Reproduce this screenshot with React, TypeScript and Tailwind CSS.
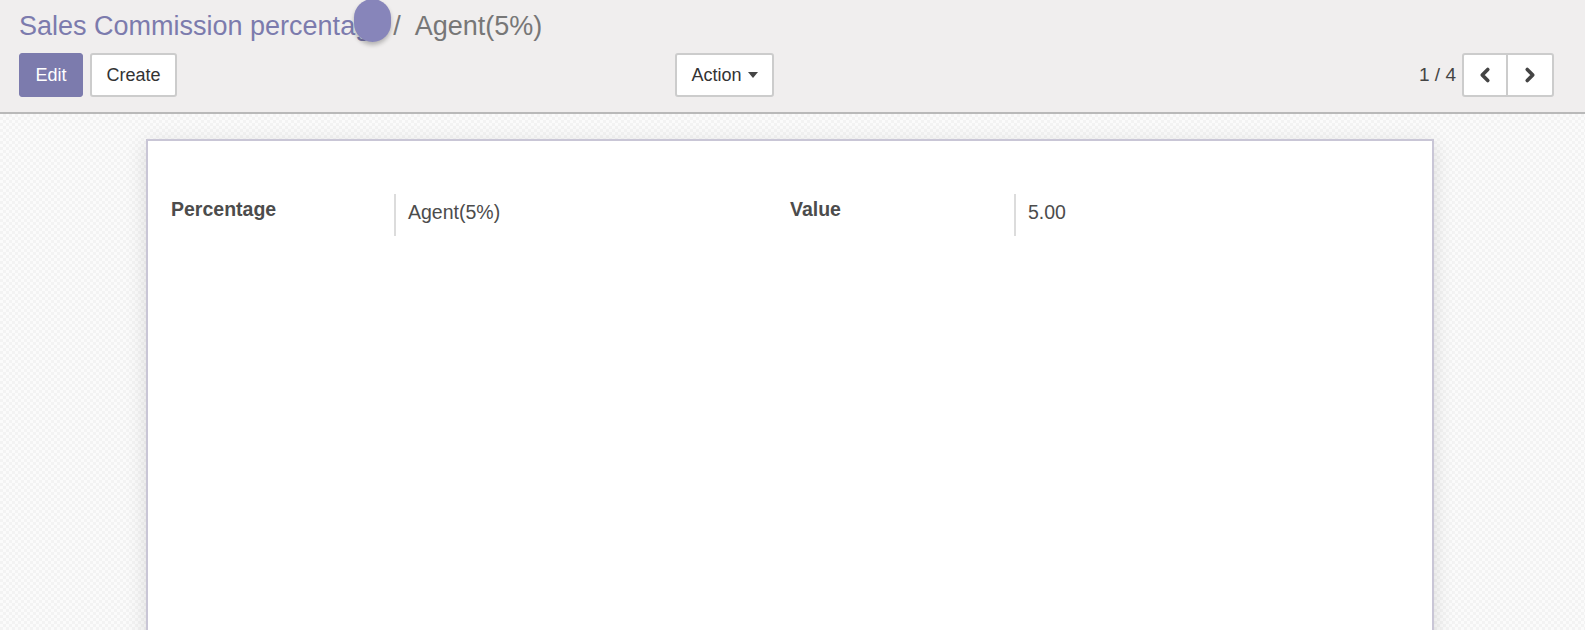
import { ChevronLeft, ChevronRight } from "lucide-react";

export default function App() {
    return (
        <div className="relative h-[630px] w-full overflow-hidden bg-[#f9f9f9] font-['Liberation_Sans',Arial,sans-serif] text-[#4c4c4c]">
            {/* control panel */}
            <div className="bg-[#f0eeee] border-b-2 border-[#b9b9b9] px-[19px] pt-[8px] pb-[15px]">
                <div className="h-[36px] leading-[36px] text-[27px] whitespace-nowrap">
                    <span className="text-[#7c7bad]">Sales Commission percentage</span>
                    <span className="text-[#777] ml-[8px] mr-[14px]">/</span>
                    <span className="text-[#777]">Agent(5%)</span>
                </div>
                <div className="flex items-center mt-[9px]">
                    <div className="flex gap-[7px] w-[656px]">
                        <button className="h-[44px] w-[64px] rounded-[3px] bg-[#7c7bad] border border-[#7c7bad] text-white text-[18px]">
                            Edit
                        </button>
                        <button className="h-[44px] w-[87px] rounded-[3px] bg-white border-2 border-[#ccc] text-[#333] text-[18px]">
                            Create
                        </button>
                    </div>
                    <button className="h-[44px] w-[99px] flex items-center justify-center gap-[6px] rounded-[3px] bg-white border-2 border-[#ccc] text-[#333] text-[18px]">
                        Action
                        <span className="w-0 h-0 border-l-[5px] border-r-[5px] border-t-[6px] border-l-transparent border-r-transparent border-t-[#444]" />
                    </button>
                    <div className="ml-auto flex items-center pr-[12px]">
                        <span className="text-[19px] text-[#444] mr-[6px]">1 / 4</span>
                        <div className="flex rounded-[3px] border-2 border-[#ccc] bg-white">
                            <button className="w-[44px] h-[40px] flex items-center justify-center border-r-2 border-[#ccc]">
                                <ChevronLeft size={22} strokeWidth={4} className="text-[#444]" />
                            </button>
                            <button className="w-[44px] h-[40px] flex items-center justify-center">
                                <ChevronRight size={22} strokeWidth={4} className="text-[#444]" />
                            </button>
                        </div>
                    </div>
                </div>
            </div>

            {/* form sheet */}
            <div className="h-full bg-[repeating-conic-gradient(#f3f3f3_0_25%,#fbfbfb_0_50%)] bg-[length:6px_6px] pt-[25px]">
                <div className="ml-[146px] w-[1288px] h-[600px] bg-white border-2 border-[#c9c6d6] shadow-[0_5px_20px_rgba(0,0,0,0.12)] px-[23px] pt-[53px]">
                    <div className="grid grid-cols-2">
                        <div className="flex">
                            <div className="w-[223px] font-bold text-[19.5px] text-[#4c4c4c] pt-[1px]">Percentage</div>
                            <div className="border-l-2 border-[#dcdcdc] h-[42px] pl-[12px] pt-[4px] text-[19.5px]">Agent(5%)</div>
                        </div>
                        <div className="flex">
                            <div className="w-[224px] font-bold text-[19.5px] text-[#4c4c4c] pt-[1px]">Value</div>
                            <div className="border-l-2 border-[#dcdcdc] h-[42px] pl-[12px] pt-[4px] text-[19.5px]">5.00</div>
                        </div>
                    </div>
                </div>
            </div>

            {/* click indicator */}
            <div className="absolute left-[354px] top-[-1px] w-[37px] h-[43px] rounded-full bg-[#8785ba] shadow-[0_3px_4px_rgba(0,0,0,0.25)]" />
        </div>
    );
}
